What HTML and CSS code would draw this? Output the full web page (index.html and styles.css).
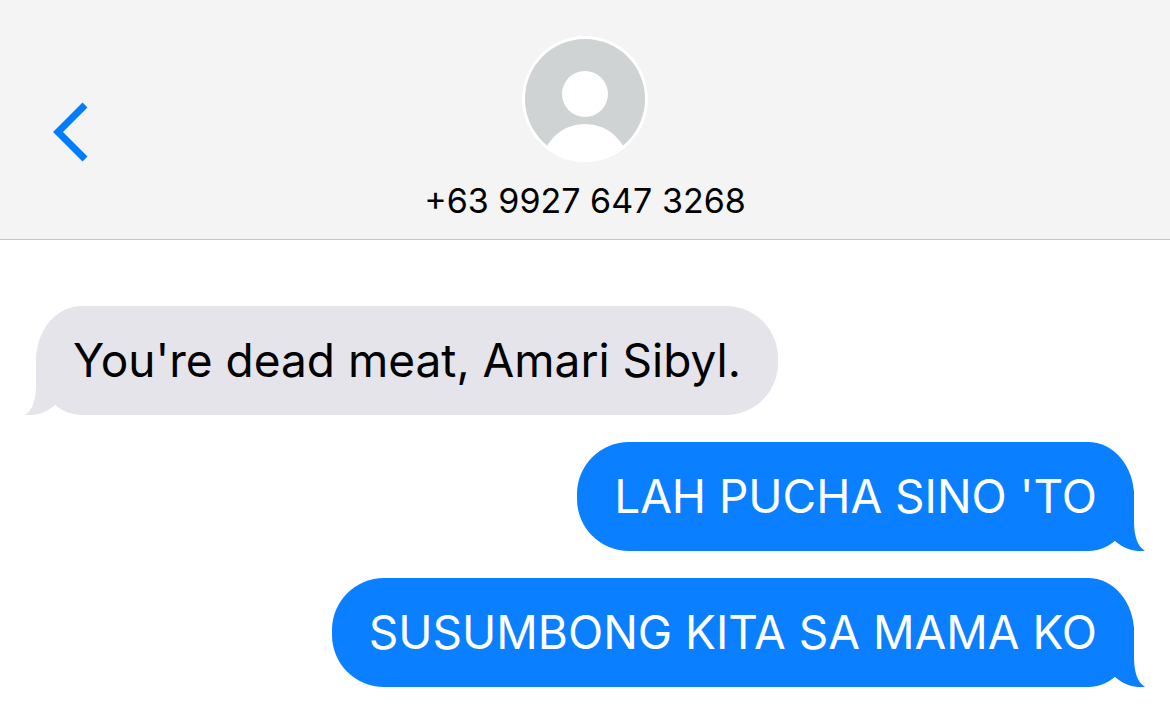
FILE: index.html
```html
<!doctype html>
<html lang="en">
	<head>
		<meta charset="UTF-8" />
		<meta name="viewport" content="width=device-width, initial-scale=1.0" />
		<title>Messages</title>
		<link rel="stylesheet" href="styles.css" />
	</head>

	<body>
		<header class="header">
			<button class="back" type="button" aria-label="Back">
				<svg width="38" height="60" viewBox="0 0 38 60">
					<path d="M35 3 L8 30 L35 57" fill="none" stroke="#007dfb" stroke-width="7" />
				</svg>
			</button>
			<div class="contact">
				<svg class="avatar" width="126" height="126" viewBox="0 0 126 126">
					<clipPath id="face"><circle cx="63" cy="63" r="63" /></clipPath>
					<circle cx="63" cy="63" r="63" fill="#fff" />
					<circle cx="63" cy="63" r="60" fill="#cfd3d4" />
					<circle cx="63" cy="58" r="23" fill="#fff" />
					<circle cx="63" cy="132" r="44" fill="#fff" clip-path="url(#face)" />
				</svg>
				<h1 class="number">+63 9927 647 3268</h1>
			</div>
		</header>

		<main class="thread">
			<div class="bubble received">
				You're dead meat, Amari Sibyl.
				<svg class="tail" width="44" height="60" viewBox="0 0 44 60">
					<path d="M11 0 V30 C11 44 8 55 0 60 C14 61 24 56 32 48 L44 0 Z" />
				</svg>
			</div>
			<div class="bubble sent">
				LAH PUCHA SINO 'TO
				<svg class="tail" width="44" height="60" viewBox="0 0 44 60">
					<path d="M33 0 V30 C33 44 36 55 44 60 C30 61 20 56 12 48 L0 0 Z" />
				</svg>
			</div>
			<div class="bubble sent">
				SUSUMBONG KITA SA MAMA KO
				<svg class="tail" width="44" height="60" viewBox="0 0 44 60">
					<path d="M33 0 V30 C33 44 36 55 44 60 C30 61 20 56 12 48 L0 0 Z" />
				</svg>
			</div>
		</main>
	</body>
</html>
```
FILE: styles.css
```css
body {
	margin: 0;
	background-color: #fff;
	color: #000;
	font-family: Inter, sans-serif;
}

.header {
	display: grid;
	grid-template-columns: 1fr auto 1fr;
	align-items: center;
	padding: 36px 50px 19px;
	background-color: #f4f4f4;
	border-bottom: 1px solid #c4c4c6;
}

.back {
	justify-self: start;
	padding: 8px 0 0;
	border: none;
	background: none;
	cursor: pointer;
}

.back svg,
.avatar {
	display: block;
}

.contact {
	display: flex;
	flex-direction: column;
	align-items: center;
	gap: 20px;
}

.number {
	margin: 0;
	font-size: 34px;
	font-weight: 400;
	line-height: 38px;
}

.thread {
	display: flex;
	flex-direction: column;
	gap: 27px;
	padding: 66px 36px 40px;
}

.bubble {
	position: relative;
	padding: 24px 37px;
	border-radius: 52px;
	font-size: 46px;
	line-height: 61px;
}

.received {
	align-self: flex-start;
	border-top-left-radius: 46px 54px;
	border-bottom-left-radius: 46px 54px;
	background-color: #e5e4ea;
	fill: #e5e4ea;
}

.sent {
	align-self: flex-end;
	border-top-right-radius: 46px 54px;
	border-bottom-right-radius: 46px 54px;
	background-color: #0a7fff;
	fill: #0a7fff;
	color: #fff;
}

.tail {
	position: absolute;
	bottom: 0;
}

.received .tail {
	left: -11px;
}

.sent .tail {
	right: -11px;
}
```
